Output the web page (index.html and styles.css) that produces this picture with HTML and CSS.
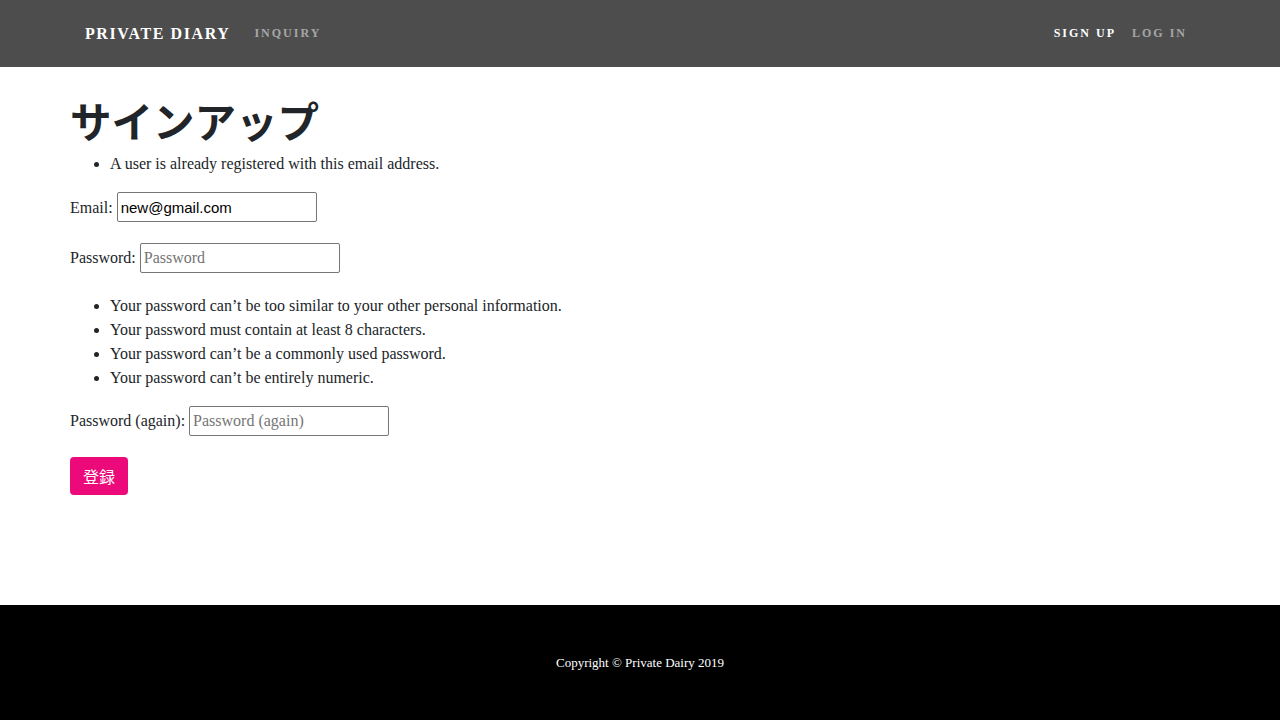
FILE: index.html
```html
<!DOCTYPE html>
<html lang="ja">
<head>
<meta charset="utf-8">
<title>Private Diary</title>
<link rel="stylesheet" href="styles.css">
</head>
<body>
<nav class="navbar">
  <div class="nav-inner">
    <div class="nav-left">
      <a class="brand" href="#">PRIVATE DIARY</a>
      <a class="nav-link" href="#">INQUIRY</a>
    </div>
    <div class="nav-right">
      <a class="nav-link active" href="#">SIGN UP</a>
      <a class="nav-link" href="#">LOG IN</a>
    </div>
  </div>
</nav>
<main class="main">
  <h1 class="title">サインアップ</h1>
  <ul class="errors">
    <li>A user is already registered with this email address.</li>
  </ul>
  <p class="field"><label>Email:</label> <input class="input input-email" type="email" value="new@gmail.com"></p>
  <p class="field"><label>Password:</label> <input class="input" type="password" placeholder="Password"></p>
  <ul class="help">
    <li>Your password can’t be too similar to your other personal information.</li>
    <li>Your password must contain at least 8 characters.</li>
    <li>Your password can’t be a commonly used password.</li>
    <li>Your password can’t be entirely numeric.</li>
  </ul>
  <p class="field"><label>Password (again):</label> <input class="input" type="password" placeholder="Password (again)"></p>
  <button class="btn" type="submit">登録</button>
</main>
<footer class="footer">
  <p class="copyright">Copyright © Private Dairy 2019</p>
</footer>
</body>
</html>
```
FILE: styles.css
```css
html, body {
  margin: 0;
  padding: 0;
}
body {
  font-family: "Liberation Serif", "Noto Sans CJK JP", serif;
  font-size: 16px;
  line-height: 24px;
  color: #212529;
  background: #fff;
}
.navbar {
  background: #4d4d4d;
  height: 67px;
}
.nav-inner {
  width: 1110px;
  margin: 0 auto;
  height: 67px;
  display: flex;
  align-items: center;
  justify-content: space-between;
}
.nav-left, .nav-right {
  display: flex;
  align-items: center;
}
.brand {
  color: #fff;
  text-decoration: none;
  font-weight: 700;
  font-size: 16px;
  letter-spacing: 1.6px;
  margin-right: 16px;
}
.nav-link {
  color: rgba(255,255,255,0.5);
  text-decoration: none;
  font-weight: 700;
  font-size: 12px;
  letter-spacing: 2px;
  padding: 0 8px 2px;
}
.nav-link.active {
  color: #fff;
}
.main {
  padding: 0 70px;
  min-height: 538px;
  box-sizing: border-box;
  padding-top: 29px;
}
.title {
  font-family: "Noto Sans CJK JP", sans-serif;
  font-size: 41.5px;
  font-weight: 700;
  line-height: 48px;
  margin: 0 0 8px;
}
.errors, .help {
  margin: 0 0 16px;
  padding-left: 40px;
}
.field {
  margin: 0 0 16px;
  height: 35px;
}
.input {
  width: 200px;
  height: 30px;
  box-sizing: border-box;
  border: 1px solid #767676;
  border-radius: 2px;
  font-family: "Liberation Serif", serif;
  font-size: 16px;
  padding: 1px 3px;
  color: #000;
  vertical-align: baseline;
}
.input-email {
  font-family: "Liberation Sans", Arial, sans-serif;
  font-size: 15px;
}
.input::placeholder {
  color: #757575;
}
.btn {
  display: block;
  background: #ec0a7b;
  color: #fff;
  border: none;
  border-radius: 4px;
  width: 58px;
  height: 38px;
  font-family: "Noto Sans CJK JP", sans-serif;
  font-size: 16px;
  padding: 0;
  margin: 0;
}
.footer {
  background: #000;
  height: 115px;
  display: flex;
  align-items: center;
  justify-content: center;
}
.copyright {
  color: #fff;
  font-size: 13px;
  margin: 0;
}
```
